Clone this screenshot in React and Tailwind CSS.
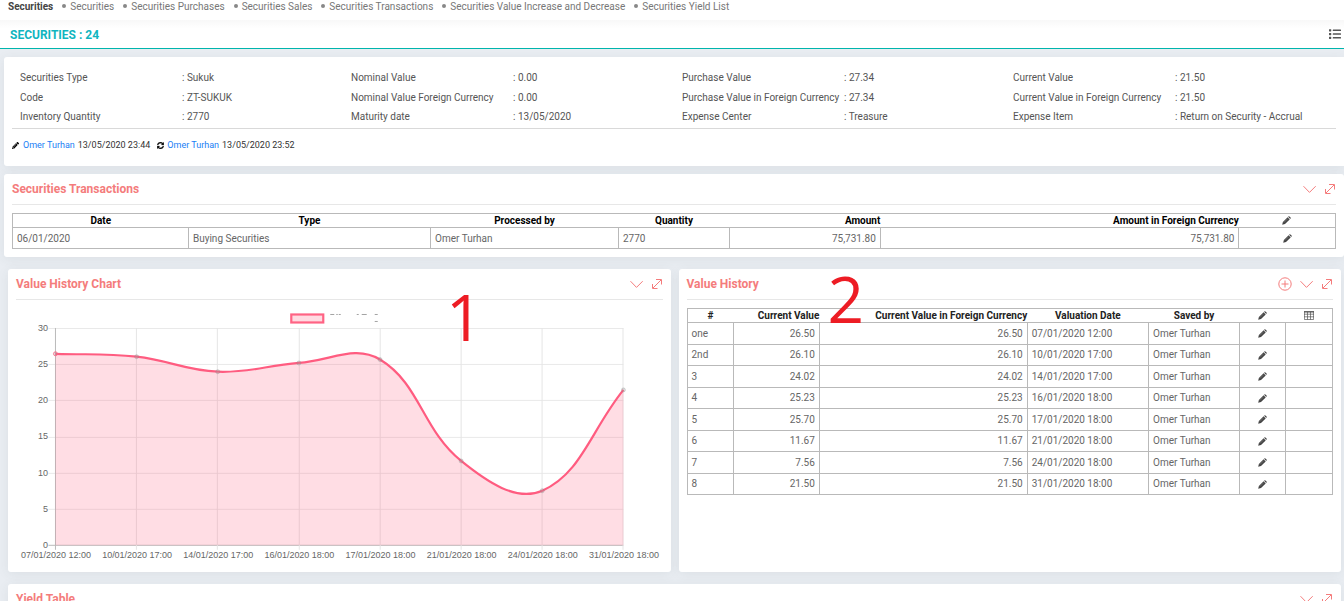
import { FaPencilAlt, FaList } from "react-icons/fa";

const font = "font-['Roboto','Liberation_Sans',sans-serif]";

const navItems = [
  "Securities",
  "Securities Purchases",
  "Securities Sales",
  "Securities Transactions",
  "Securities Value Increase and Decrease",
  "Securities Yield List",
];

const details = [
  [["Securities Type", "Sukuk"], ["Code", "ZT-SUKUK"], ["Inventory Quantity", "2770"]],
  [["Nominal Value", "0.00"], ["Nominal Value Foreign Currency", "0.00"], ["Maturity date", "13/05/2020"]],
  [["Purchase Value", "27.34"], ["Purchase Value in Foreign Currency", "27.34"], ["Expense Center", "Treasure"]],
  [["Current Value", "21.50"], ["Current Value in Foreign Currency", "21.50"], ["Expense Item", "Return on Security - Accrual"]],
];

const history = [
  ["one", "26.50", "07/01/2020 12:00"],
  ["2nd", "26.10", "10/01/2020 17:00"],
  ["3", "24.02", "14/01/2020 17:00"],
  ["4", "25.23", "16/01/2020 18:00"],
  ["5", "25.70", "17/01/2020 18:00"],
  ["6", "11.67", "21/01/2020 18:00"],
  ["7", "7.56", "24/01/2020 18:00"],
  ["8", "21.50", "31/01/2020 18:00"],
];

function PlusCircle() {
  return (
    <svg width="14" height="14" viewBox="0 0 14 14" fill="none" stroke="currentColor" aria-hidden="true">
      <circle cx="7" cy="7" r="6.2" />
      <path d="M7 3.5v7M3.5 7h7" />
    </svg>
  );
}

function ChevronDown() {
  return (
    <svg width="14" height="14" viewBox="0 0 14 14" fill="none" stroke="currentColor" aria-hidden="true">
      <path d="M0.5 4.2 6.5 10.4l6.2-6.2" />
    </svg>
  );
}

function Expand() {
  return (
    <svg width="10" height="14" viewBox="0 0 10 14" fill="none" stroke="currentColor" aria-hidden="true">
      <path d="M1 11 9 3M4 2.5h5.5v5M0.5 7v4.5h5" />
    </svg>
  );
}

function Refresh() {
  return (
    <svg width="7" height="7" viewBox="0 0 512 512" fill="#111" stroke="#111" strokeWidth="20" aria-hidden="true">
      <path d="M370.700 133.300C339.500 104 298.900 88 255.800 88c-77.500.1-144.300 53.200-162.800 126.900-1.300 5.400-6.100 9.100-11.700 9.100H24.100c-7.500 0-13.200-6.800-11.800-14.200C33.900 94.900 134.800 8 256 8c66.400 0 126.800 26.100 171.300 68.700L463 41c15.100-15.100 41-4.400 41 17v134c0 13.300-10.700 24-24 24H346c-21.400 0-32.100-25.900-17-41l41.700-41.700zM32 296h134c21.400 0 32.100 25.900 17 41l-41.800 41.800c31.300 29.300 71.800 45.300 114.900 45.200 77.400-.1 144.300-53.100 162.800-126.800 1.300-5.400 6.100-9.100 11.700-9.100h57.300c7.500 0 13.200 6.800 11.800 14.200C478.100 417.100 377.200 504 256 504c-66.400 0-126.800-26.100-171.300-68.700L49 471c-15.100 15.100-41 4.400-41-17V320c0-13.300 10.700-24 24-24z" />
    </svg>
  );
}

function TableIcon() {
  return (
    <svg width="10" height="9" viewBox="0 0 10 9" fill="none" stroke="#555" aria-hidden="true" className="inline-block">
      <path d="M0 0.8h10" strokeWidth="1.4" />
      <path d="M0.4 0.5v8h9.2v-8M0 3.2h10M0 5.8h10M3.5 1v7.5M6.5 1v7.5" strokeWidth="0.7" />
    </svg>
  );
}

function Pencil() {
  return (
    <svg width="9" height="9" viewBox="0 0 9 9" aria-hidden="true">
      <path d="M0.2 8.8 0.9 6 5.6 1.3 7.7 3.4 3 8.1Z" fill="#444" />
      <path d="M6.1 0.8 6.7 0.3Q7 0 7.4 0.4L8.6 1.6Q9 2 8.7 2.3L8.200 2.900Z" fill="#444" />
      <path d="M1.900 6.500 5.600 2.800" stroke="#8a8a8a" strokeWidth="0.600" />
    </svg>
  );
}

function EditButton() {
  return (
    <button type="button" aria-label="Edit" className="inline-block align-middle">
      <Pencil />
    </button>
  );
}

function Panel({ title, add, className = "", children }) {
  return (
    <section className={"rounded-[3px] bg-white px-2 shadow-[0_2px_12px_rgba(60,80,80,0.08)] " + className}>
      <header className="flex h-[31px] items-center justify-between border-b border-[#e7e7e7] pr-px text-[#f47c7c]">
        <h2 className="text-xs font-bold">{title}</h2>
        <div className="flex items-center gap-2">
          {add && (
            <button type="button" aria-label="Add">
              <PlusCircle />
            </button>
          )}
          <button type="button" aria-label={"Collapse " + title}>
            <ChevronDown />
          </button>
          <button type="button" aria-label={"Expand " + title}>
            <Expand />
          </button>
        </div>
      </header>
      {children}
    </section>
  );
}

const cell = "border border-[#b9b9b9] px-1";

function TransactionsTable() {
  return (
    <table className="mt-2 w-full table-fixed border-collapse border border-[#b9b9b9] text-[10px] text-[#666]">
      <colgroup>
        <col className="w-[13.300%]" />
        <col className="w-[18.300%]" />
        <col className="w-[14.200%]" />
        <col className="w-[8.400%]" />
        <col className="w-[11.400%]" />
        <col className="w-[27.100%]" />
        <col className="w-[7.300%]" />
      </colgroup>
      <thead>
        <tr className="h-[14px] leading-3 text-black">
          <th className="font-bold">Date</th>
          <th className="font-bold">Type</th>
          <th className="font-bold">Processed by</th>
          <th className="font-bold">Quantity</th>
          <th className="text-right font-bold">Amount</th>
          <th className="text-right font-bold">Amount in Foreign Currency</th>
          <th><EditButton /></th>
        </tr>
      </thead>
      <tbody>
        <tr className="h-[21px] leading-3">
          <td className={cell + " pt-px"}>06/01/2020</td>
          <td className={cell + " pt-px"}>Buying Securities</td>
          <td className={cell + " pt-px"}>Omer Turhan</td>
          <td className={cell + " pt-px"}>2770</td>
          <td className={cell + " pt-px text-right"}>75,731.80</td>
          <td className={cell + " pt-px text-right"}>75,731.80</td>
          <td className={cell + " pt-px text-center"}><EditButton /></td>
        </tr>
      </tbody>
    </table>
  );
}

function HistoryTable() {
  return (
    <table className="mt-2 w-full table-fixed border-collapse border border-[#b9b9b9] text-[10px] text-[#666]">
      <colgroup>
        <col className="w-[7.200%]" />
        <col className="w-[13.300%]" />
        <col className="w-[32.200%]" />
        <col className="w-[18.800%]" />
        <col className="w-[14.100%]" />
        <col className="w-[7.100%]" />
        <col className="w-[7.300%]" />
      </colgroup>
      <thead>
        <tr className="h-[14px] leading-3 text-[#222]">
          <th className="font-bold">#</th>
          <th className="text-right font-bold">Current Value</th>
          <th className="text-right font-bold">Current Value in Foreign Currency</th>
          <th className="font-bold">Valuation Date</th>
          <th className="font-bold">Saved by</th>
          <th><EditButton /></th>
          <th><TableIcon /></th>
        </tr>
      </thead>
      <tbody>
        {history.map(([id, value, date]) => (
          <tr key={id} className="leading-3 odd:h-[22px] even:h-[21px] last:h-[22px]">
            <td className={cell}>{id}</td>
            <td className={cell + " text-right"}>{value}</td>
            <td className={cell + " text-right"}>{value}</td>
            <td className={cell}>{date}</td>
            <td className={cell}>Omer Turhan</td>
            <td className={cell + " text-center"}><EditButton /></td>
            <td className={cell} />
          </tr>
        ))}
      </tbody>
    </table>
  );
}

const X0 = 39.5;
const STEP = 81.2;
const yOf = (v) => 245.5 - v * 7.233;

const points = history.map((row, i) => ({ x: X0 + i * STEP, y: yOf(Number(row[1])) }));

function curve(pts, tension = 0.4) {
  const controls = pts.map((p, i) => {
    const prev = pts[i - 1] || p;
    const next = pts[i + 1] || p;
    const d1 = Math.hypot(p.x - prev.x, p.y - prev.y);
    const d2 = Math.hypot(next.x - p.x, next.y - p.y);
    const a = (tension * d1) / (d1 + d2);
    const b = (tension * d2) / (d1 + d2);
    return {
      before: [p.x - a * (next.x - prev.x), p.y - a * (next.y - prev.y)],
      after: [p.x + b * (next.x - prev.x), p.y + b * (next.y - prev.y)],
    };
  });
  return pts
    .map((p, i) =>
      i === 0
        ? `M${p.x} ${p.y}`
        : `C${controls[i - 1].after.join(" ")} ${controls[i].before.join(" ")} ${p.x} ${p.y}`
    )
    .join("");
}

function ValueChart() {
  const line = curve(points);
  const right = points[points.length - 1].x;
  return (
    <svg viewBox="0 0 647 272" className="block w-full" role="img" aria-label="Value history line chart">
      <rect x="275.500" y="14.500" width="32" height="8" fill="#ffdbe2" stroke="#ff6384" strokeWidth="2.200" />
      <path d="M314.500 14.500h4M320.500 14.500h1.500M323 14.500h2M341 14.500h2M346 14.500h5M359 14.500h3M359 21.500h3" stroke="#999" strokeWidth="0.900" fill="none" />
      {[0, 5, 10, 15, 20, 25, 30].map((v) => (
        <g key={v}>
          <path d={`M${X0 - 7} ${Math.floor(yOf(v)) + 0.5}H${right}`} stroke={v ? "#e9e9e9" : "#bbb"} />
          <text x="32" y={yOf(v) + 2.5} textAnchor="end" fontSize="9" fill="#666" fontFamily="Liberation Sans, sans-serif">
            {v}
          </text>
        </g>
      ))}
      {points.map((p, i) => (
        <path key={i} d={`M${Math.floor(p.x) + 0.5} 28V250`} stroke={i ? "#e5e5e5" : "#bbb"} />
      ))}
      <path d={`${line}V245.5H${X0}Z`} fill="#ff6384" fillOpacity="0.22" />
      <path d={line} fill="none" stroke="#ff5c80" strokeWidth="2.2" />
      {points.map((p, i) => (
        <circle key={i} cx={p.x} cy={p.y} r="2" fill="#999" fillOpacity="0.3" stroke={i ? "#888" : "#ff6384"} strokeOpacity={i ? 0.4 : 1} strokeWidth="0.8" />
      ))}
      {points.map((p, i) => (
        <text key={i} x={p.x + 0.5} y="258" textAnchor="middle" fontSize="9" fill="#666" fontFamily="Liberation Sans, sans-serif">
          {history[i][2]}
        </text>
      ))}
    </svg>
  );
}

export default function App() {
  return (
    <div className={"h-screen overflow-hidden bg-[#e9edf2] text-[10px] text-[#555] " + font}>
      <nav className="flex h-5 items-start gap-[9px] bg-white pl-2 text-[10px] leading-[13px] text-[#777]">
        <a href="#securities" className="font-bold text-[#444]">Securities</a>
        {navItems.map((item) => (
          <a key={item} href="#list" className="flex items-start gap-1">
            <span className="mt-1 size-1 rounded-full bg-[#888]" />
            {item}
          </a>
        ))}
      </nav>
      <header className="flex h-[29px] items-center justify-between border-b border-[#00b5ad] bg-white bg-linear-to-b from-[#f8f8f8] to-white to-30% pr-[3px] pl-[10px]">
        <h1 className="pt-px text-xs font-bold text-[#10b5bf]">SECURITIES : 24</h1>
        <button type="button" aria-label="List" className="text-[#555]">
          <FaList size={12} />
        </button>
      </header>

      <main className="pl-1">
        <section className="mt-2 h-[109px] rounded-l-[3px] bg-white px-2 shadow-[0_2px_12px_rgba(60,80,80,0.08)]">
          <div className="border-b border-[#d9d9d9] pt-[11px] pb-[2px] pl-2">
            <div className="-mr-2 grid grid-cols-4">
              {details.map((column) => (
                <dl key={column[0][0]} className="grid grid-cols-[162px_1fr] grid-rows-[20px_20px_18px] items-center text-[10px] leading-[18px] whitespace-nowrap">
                  {column.map(([label, value]) => (
                    <div key={label} className="contents">
                      <dt>{label}</dt>
                      <dd>: {value}</dd>
                    </div>
                  ))}
                </dl>
              ))}
            </div>
          </div>
          <p className="flex items-center gap-[3px] pt-[10px] text-[9px] leading-[13px] text-[#333]">
            <FaPencilAlt size={7} className="mr-px text-black" />
            <a href="#user" className="text-[#1a80f5]">Omer Turhan</a>
            <span className="mr-1">13/05/2020 23:44</span>
            <Refresh />
            <a href="#user" className="text-[#1a80f5]">Omer Turhan</a>
            <span>13/05/2020 23:52</span>
          </p>
        </section>

        <Panel title="Securities Transactions" className="mt-2 pb-2">
          <TransactionsTable />
        </Panel>

        <div className="mt-3 mr-[3px] ml-1 grid grid-cols-2 gap-2">
          <div className="relative">
            <Panel title="Value History Chart" className="h-full">
              <ValueChart />
            </Panel>
            <span className="absolute top-[12px] left-[438px] font-['Open_Sans',sans-serif] text-[64px] leading-[72px] text-[#ed1c24]">1</span>
          </div>
          <div className="relative">
            <Panel title="Value History" add className="h-full">
              <HistoryTable />
            </Panel>
            <span className="absolute top-[-6px] left-[149px] font-['Open_Sans',sans-serif] text-[64px] leading-[72px] text-[#ed1c24]">2</span>
          </div>
        </div>

        <Panel title="Yield Table" className="mt-3 mr-[3px] ml-1 h-20" />
      </main>
    </div>
  );
}
